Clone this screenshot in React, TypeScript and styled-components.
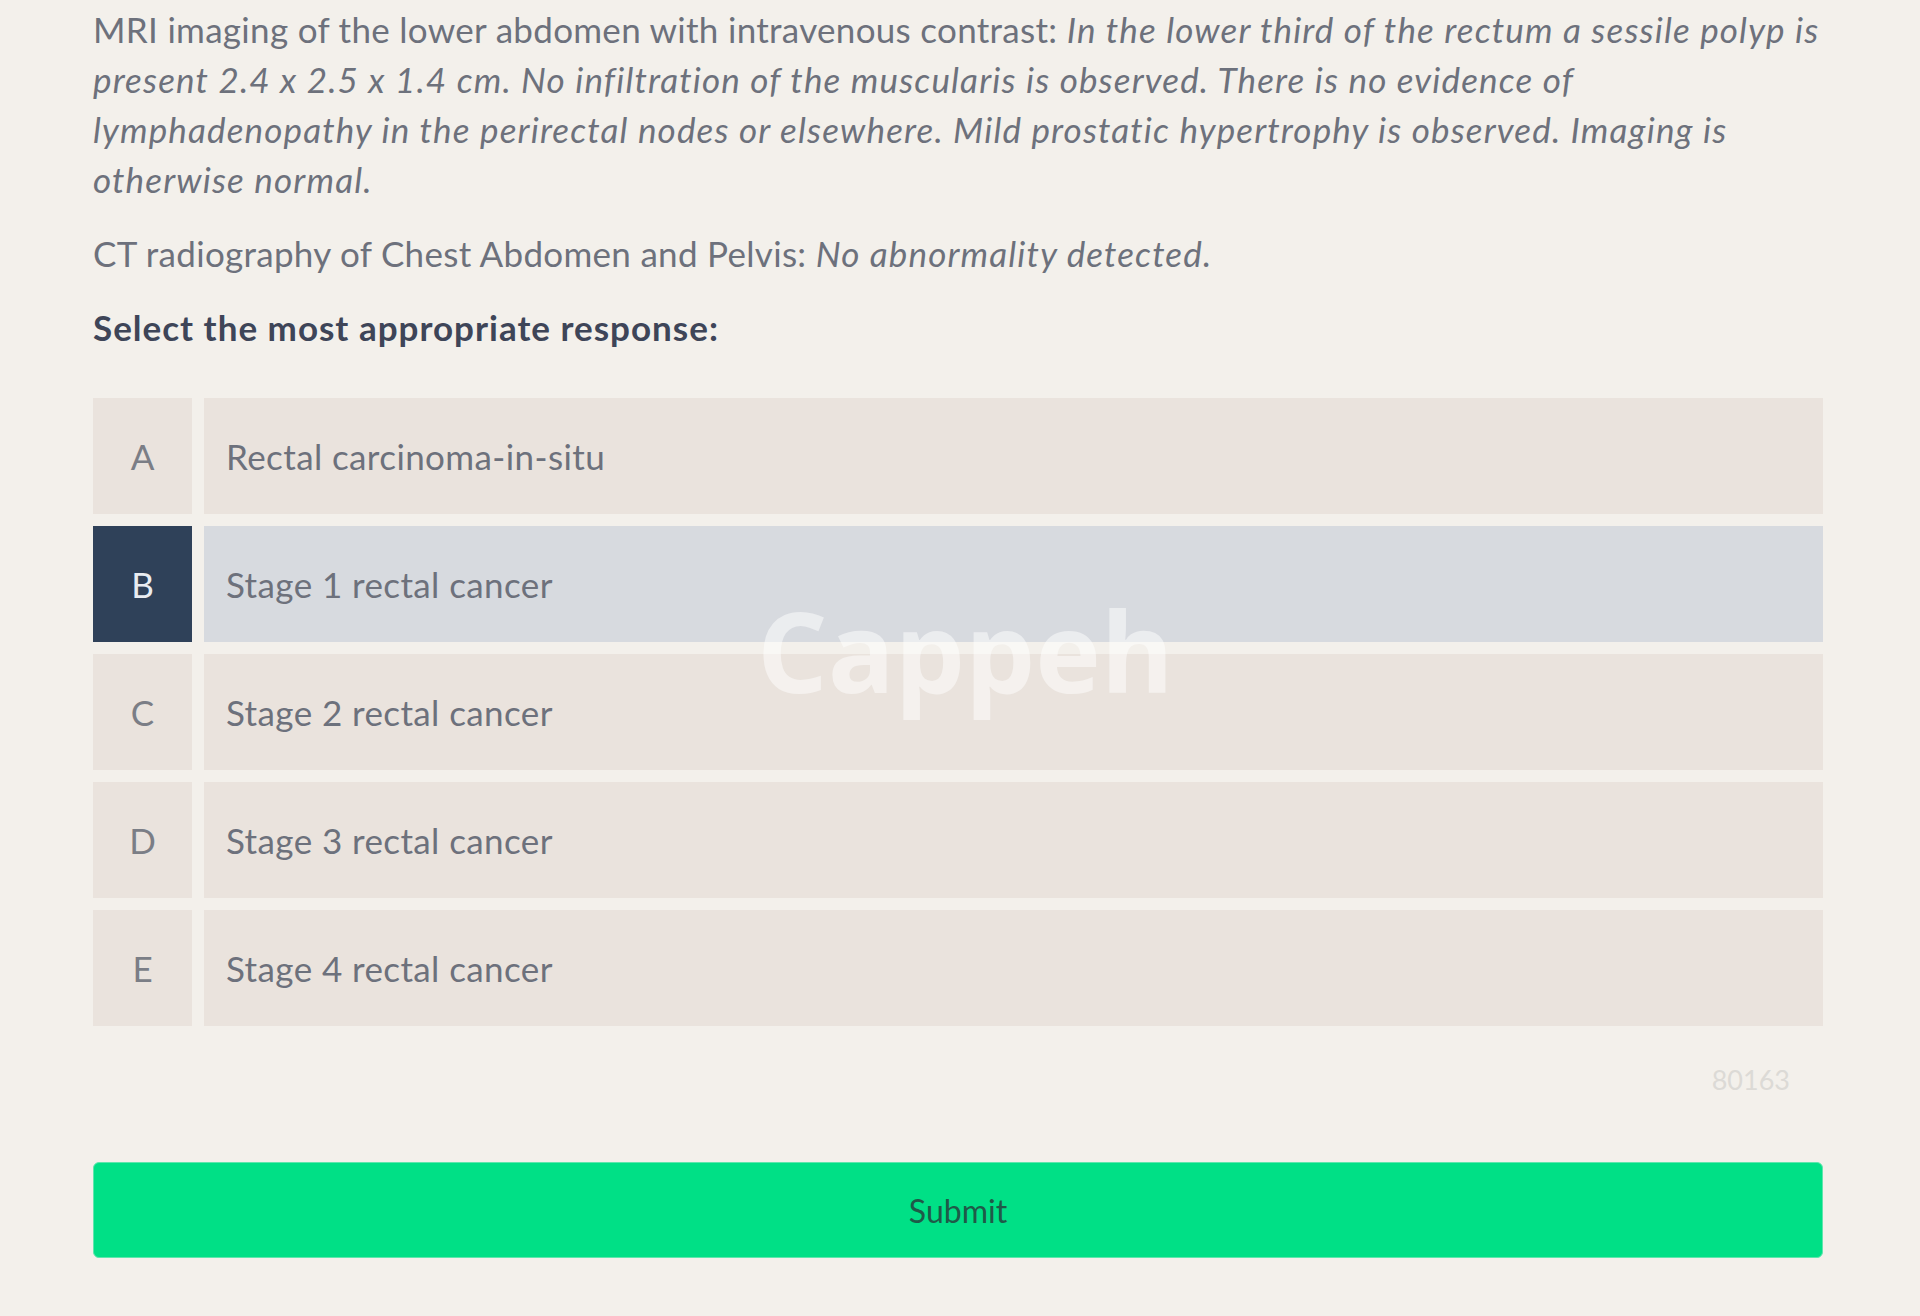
import React from 'react';
import styled, { createGlobalStyle } from 'styled-components';

const GlobalStyle = createGlobalStyle`
  html, body {
    margin: 0;
    padding: 0;
    background: #f3f0eb;
  }
  body {
    font-family: Lato, "Noto Sans", "Liberation Sans", sans-serif;
    -webkit-font-smoothing: antialiased;
  }
`;

interface Option {
  key: string;
  text: string;
}

const options: Option[] = [
  { key: 'A', text: 'Rectal carcinoma-in-situ' },
  { key: 'B', text: 'Stage 1 rectal cancer' },
  { key: 'C', text: 'Stage 2 rectal cancer' },
  { key: 'D', text: 'Stage 3 rectal cancer' },
  { key: 'E', text: 'Stage 4 rectal cancer' },
];

const App: React.FC = () => {
  const selected = 'B';

  return (
    <>
      <GlobalStyle />
      <Page>
        <Paragraph>
          MRI imaging of the lower abdomen with intravenous contrast:{' '}
          <em>
            In the lower third of the rectum a sessile polyp is present 2.4 x 2.5 x 1.4 cm. No
            infiltration of the muscularis is observed. There is no evidence of lymphadenopathy in
            the perirectal nodes or elsewhere. Mild prostatic hypertrophy is observed. Imaging is
            otherwise normal.
          </em>
        </Paragraph>
        <Paragraph>
          CT radiography of Chest Abdomen and Pelvis: <em>No abnormality detected.</em>
        </Paragraph>
        <Prompt>Select the most appropriate response:</Prompt>

        <OptionList>
          {options.map((opt) => {
            const active = opt.key === selected;
            return (
              <OptionRow key={opt.key}>
                <Letter active={active}>{opt.key}</Letter>
                <Answer active={active}>{opt.text}</Answer>
              </OptionRow>
            );
          })}
          <Watermark>Cappeh</Watermark>
        </OptionList>

        <QuestionId>80163</QuestionId>

        <SubmitButton type="button">Submit</SubmitButton>
      </Page>
    </>
  );
};

const Page = styled.main`
  box-sizing: border-box;
  width: 1920px;
  padding: 4px 97px 57px 93px;
`;

const Paragraph = styled.p`
  margin: 0 0 24px;
  font-size: 35px;
  line-height: 50px;
  letter-spacing: 0.3px;
  color: #6d717c;

  em {
    font-style: italic;
    letter-spacing: 1.15px;
  }
`;

const Prompt = styled.p`
  margin: 0 0 46px;
  font-size: 35px;
  line-height: 50px;
  letter-spacing: 1px;
  font-weight: 700;
  color: #3e4558;
`;

const OptionList = styled.div`
  position: relative;
  display: flex;
  flex-direction: column;
  gap: 12px;
`;

const OptionRow = styled.div`
  display: grid;
  grid-template-columns: 99px 1fr;
  column-gap: 12px;
  height: 116px;
`;

const Letter = styled.div<{ active?: boolean }>`
  display: flex;
  align-items: center;
  justify-content: center;
  background: ${({ active }) => (active ? '#2f4159' : '#eae3dd')};
  color: ${({ active }) => (active ? '#e9ecf1' : '#7b7e86')};
  font-size: 35px;
`;

const Answer = styled.div<{ active?: boolean }>`
  display: flex;
  align-items: center;
  padding-left: 22px;
  background: ${({ active }) => (active ? '#d7dadf' : '#eae3dd')};
  color: #6d717c;
  font-size: 35px;
  letter-spacing: 0.4px;
`;

const Watermark = styled.div`
  position: absolute;
  top: 197px;
  left: 664px;
  font-family: "Open Sans", "Noto Sans", sans-serif;
  font-weight: 700;
  font-size: 111px;
  line-height: 1;
  color: rgba(255, 255, 255, 0.5);
  pointer-events: none;
  user-select: none;
`;

const QuestionId = styled.div`
  margin-top: 34px;
  padding-right: 33px;
  text-align: right;
  font-size: 27px;
  line-height: 40px;
  color: #dcdad6;
`;

const SubmitButton = styled.button`
  display: block;
  width: 100%;
  height: 96px;
  margin-top: 62px;
  border: 1px solid #5fe6ad;
  border-radius: 6px;
  background: #00e086;
  color: #1f5a48;
  font-family: inherit;
  font-size: 32px;
  cursor: pointer;
`;

export default App;
